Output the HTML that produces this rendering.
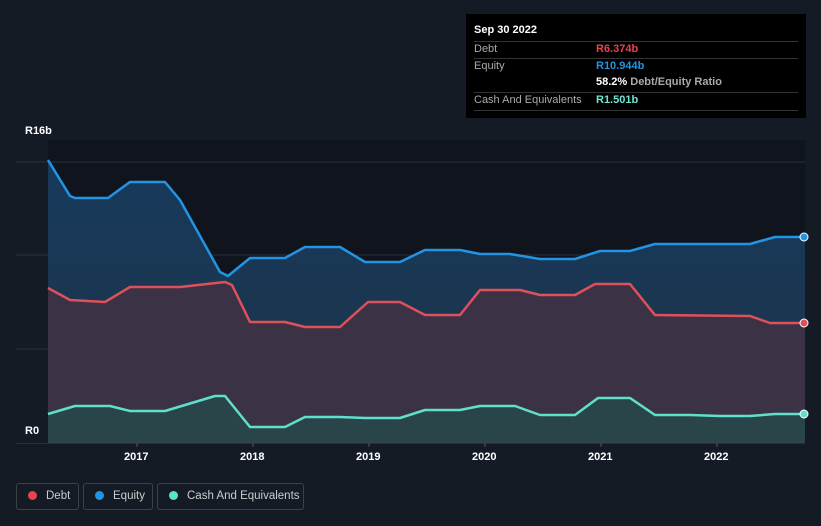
<!DOCTYPE html><html><head><style>
body{margin:0;width:821px;height:526px;background:#151b25;font-family:"Liberation Sans",sans-serif;overflow:hidden;position:relative}
.tt{position:absolute;left:466px;top:14px;width:340px;height:104px;background:#000;color:#fff;font-size:11px}
.row{position:absolute;left:8px;width:324px;height:17px;border-top:1px solid #333;color:#aaa;line-height:15px}
.row span{position:absolute;left:122px;font-weight:bold}
.lg{position:absolute;top:483px;height:27px;border:1px solid #3a414c;border-radius:3px;color:#ccc;font-size:11.5px;line-height:25px;box-sizing:border-box;white-space:nowrap}
.lg i{display:inline-block;width:9px;height:9px;border-radius:50%;margin:0 9px 0 11px;vertical-align:-1px}
.ax{position:absolute;color:#fff;font-size:11px;font-weight:bold}
</style></head><body>
<svg width="821" height="526" style="position:absolute;left:0;top:0">
<defs>
<linearGradient id="ge" x1="0" y1="0" x2="0" y2="1"><stop offset="0" stop-color="#173a5c"/><stop offset="1" stop-color="#1d3347"/></linearGradient>
</defs>
<rect x="48" y="140" width="757" height="303" fill="#10151d"/>
<line x1="16" y1="162" x2="805" y2="162" stroke="#2a313c"/>
<line x1="16" y1="255" x2="805" y2="255" stroke="#2a313c"/>
<line x1="16" y1="349" x2="805" y2="349" stroke="#2a313c"/>
<polygon fill="url(#ge)" points="48,160 70,196 75,198 108,198 130,182 165,182 180,200 220,272 228,276 250,258 285,258 305,247 340,247 365,262 400,262 425,250 460,250 480,254 510,254 540,259 575,259 600,251 630,251 655,244 750,244 775,237 805,237 805,443 48,443"/>
<polygon fill="#3b3246" points="48,288 70,300 105,302 130,287 180,287 225,282 232,285 250,322 285,322 305,327 340,327 368,302 400,302 425,315 460,315 480,290 520,290 540,295 575,295 595,284 630,284 655,315 750,316 770,323 805,323 805,443 48,443"/>
<polygon fill="#2a4549" points="48,414 75,406 110,406 130,411 165,411 215,396 225,396 250,427 285,427 305,417 340,417 365,418 400,418 425,410 460,410 480,406 515,406 540,415 575,415 598,398 630,398 655,415 690,415 720,416 750,416 775,414 805,414 805,443 48,443"/>
<g fill="none" stroke-width="2.5" stroke-linejoin="round">
<polyline stroke="#2394e4" points="48,160 70,196 75,198 108,198 130,182 165,182 180,200 220,272 228,276 250,258 285,258 305,247 340,247 365,262 400,262 425,250 460,250 480,254 510,254 540,259 575,259 600,251 630,251 655,244 750,244 775,237 805,237"/>
<polyline stroke="#e0505b" points="48,288 70,300 105,302 130,287 180,287 225,282 232,285 250,322 285,322 305,327 340,327 368,302 400,302 425,315 460,315 480,290 520,290 540,295 575,295 595,284 630,284 655,315 750,316 770,323 805,323"/>
<polyline stroke="#5fe0cc" points="48,414 75,406 110,406 130,411 165,411 215,396 225,396 250,427 285,427 305,417 340,417 365,418 400,418 425,410 460,410 480,406 515,406 540,415 575,415 598,398 630,398 655,415 690,415 720,416 750,416 775,414 805,414"/>
</g>
<circle cx="804" cy="237" r="4" fill="#2394e4" stroke="#fff" stroke-width="1"/>
<circle cx="804" cy="323" r="4" fill="#e0505b" stroke="#fff" stroke-width="1"/>
<circle cx="804" cy="414" r="4" fill="#5fe0cc" stroke="#fff" stroke-width="1"/>
<line x1="16" y1="443" x2="805" y2="443" stroke="#3a414c"/>
<g stroke="#555"><line x1="137" y1="443" x2="137" y2="447"/><line x1="253" y1="443" x2="253" y2="447"/><line x1="369" y1="443" x2="369" y2="447"/><line x1="485" y1="443" x2="485" y2="447"/><line x1="601" y1="443" x2="601" y2="447"/><line x1="717" y1="443" x2="717" y2="447"/></g>
<rect x="16" y="421" width="32" height="22" fill="#151b25"/>
</svg>
<div class="ax" style="left:25px;top:125px">R16b</div>
<div class="ax" style="left:25px;top:425px">R0</div>
<div class="ax" style="left:124px;top:451px">2017</div>
<div class="ax" style="left:240px;top:451px">2018</div>
<div class="ax" style="left:356px;top:451px">2019</div>
<div class="ax" style="left:472px;top:451px">2020</div>
<div class="ax" style="left:588px;top:451px">2021</div>
<div class="ax" style="left:704px;top:451px">2022</div>
<div class="tt">
<div style="position:absolute;left:8px;top:10px;font-weight:bold">Sep 30 2022</div>
<div class="row" style="top:27px">Debt<span style="color:#e8434b">R6.374b</span></div>
<div class="row" style="top:44px">Equity<span style="color:#2394e4">R10.944b</span></div>
<div class="row" style="top:61px;border:0"><span style="color:#fff">58.2% <b style="color:#aaa">Debt/Equity Ratio</b></span></div>
<div class="row" style="top:78px">Cash And Equivalents<span style="color:#6fe6d2">R1.501b</span></div>
<div style="position:absolute;left:8px;top:96px;width:324px;border-top:1px solid #333"></div>
</div>
<div class="lg" style="left:16px;width:63px"><i style="background:#e8434b"></i>Debt</div>
<div class="lg" style="left:83px;width:70px"><i style="background:#2394e4"></i>Equity</div>
<div class="lg" style="left:157px;width:147px"><i style="background:#5fe0cc"></i>Cash And Equivalents</div>
</body></html>
